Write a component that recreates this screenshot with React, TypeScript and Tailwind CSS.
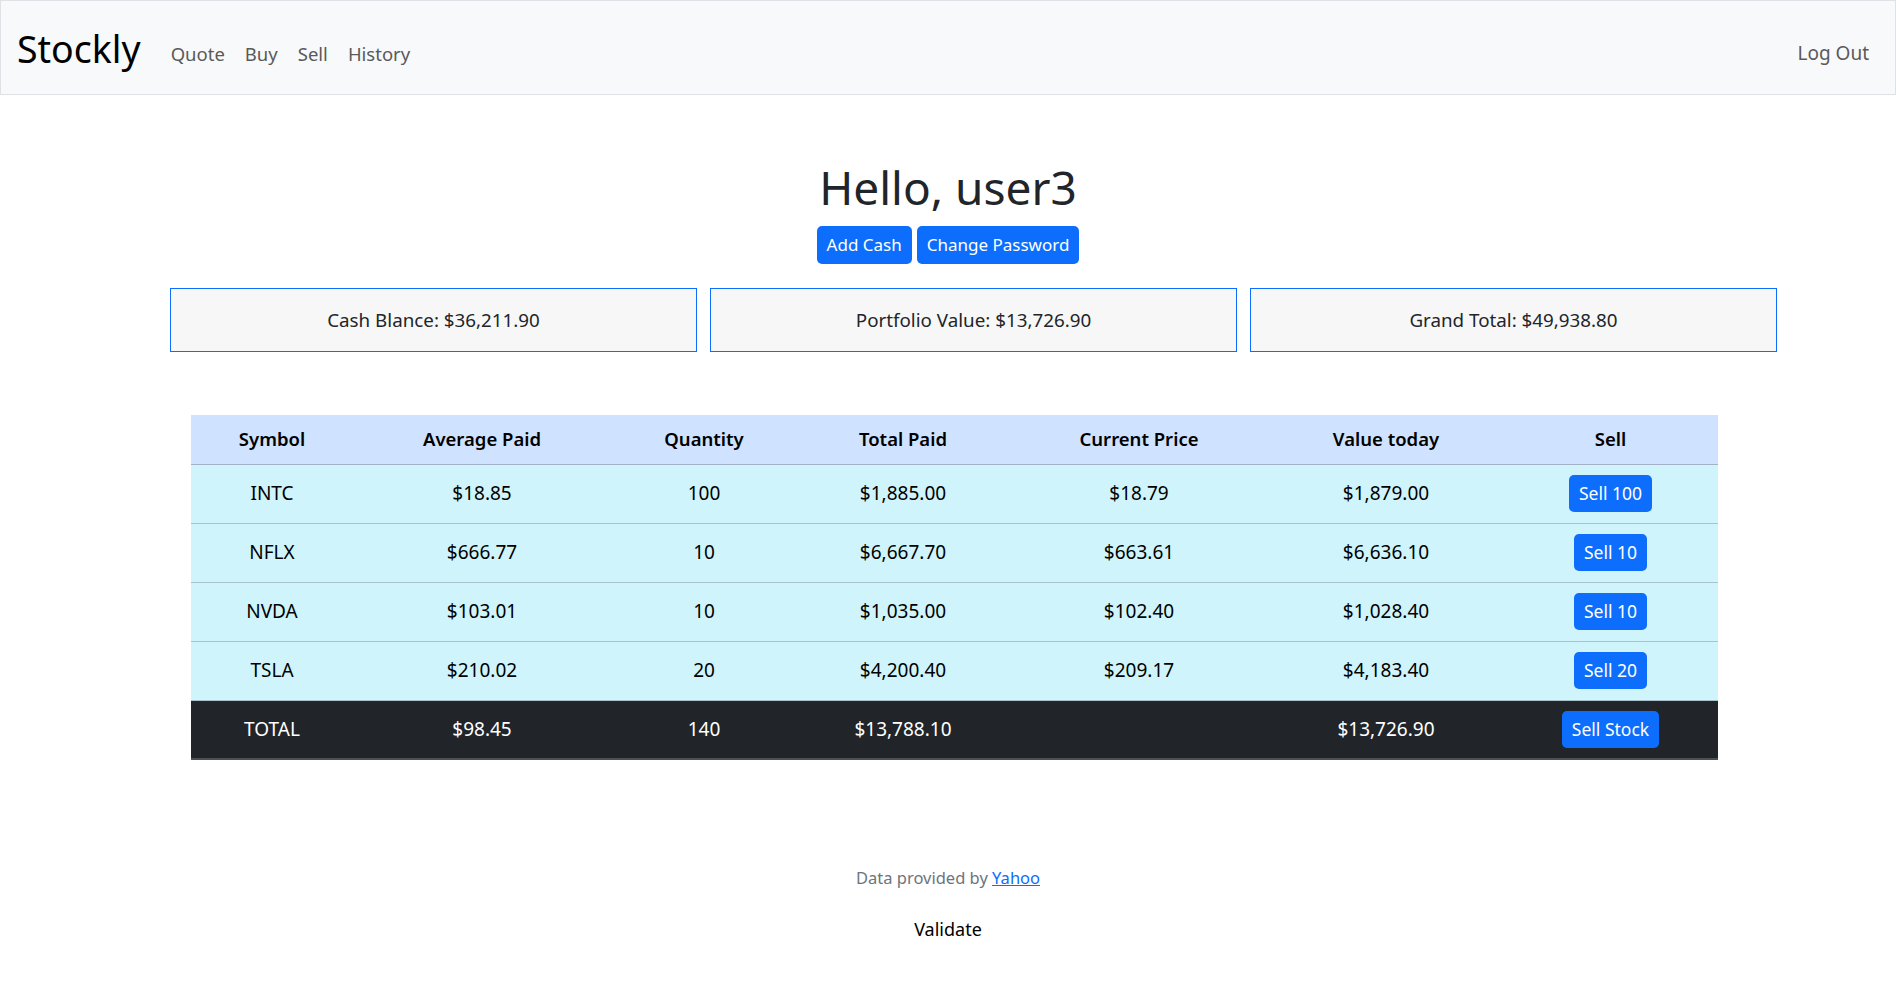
import React from 'react'

const font = { fontFamily: '"Noto Sans", "Open Sans", sans-serif' }

const holdings = [
  { symbol: 'INTC', avg: '$18.85', qty: 100, paid: '$1,885.00', price: '$18.79', value: '$1,879.00' },
  { symbol: 'NFLX', avg: '$666.77', qty: 10, paid: '$6,667.70', price: '$663.61', value: '$6,636.10' },
  { symbol: 'NVDA', avg: '$103.01', qty: 10, paid: '$1,035.00', price: '$102.40', value: '$1,028.40' },
  { symbol: 'TSLA', avg: '$210.02', qty: 20, paid: '$4,200.40', price: '$209.17', value: '$4,183.40' },
]

function Navbar() {
  return (
    <nav className="h-[95px] flex items-center justify-between bg-[#f8f9fa] border border-[#dee2e6] pl-[16px] pr-[26px]">
      <div className="flex items-center">
        <a className="text-[37.5px] text-black leading-none mr-[30px] mt-[2px]">Stockly</a>
        <ul className="flex items-center gap-[20px] text-[18.5px] text-[#595a5c] mt-[12px]">
          <li>Quote</li>
          <li>Buy</li>
          <li>Sell</li>
          <li>History</li>
        </ul>
      </div>
      <a className="text-[19px] text-[#595a5c] mt-[12px]">Log Out</a>
    </nav>
  )
}

function Btn({ children, className = '' }: { children: React.ReactNode; className?: string }) {
  return (
    <button className={`bg-[#0d6efd] text-white rounded-[5px] ${className}`}>{children}</button>
  )
}

export default function App() {
  return (
    <div className="min-h-screen bg-white text-[#212529]" style={font}>
      <Navbar />

      <main className="pt-[62px]">
        <div className="flex flex-col items-center">
          <h1 className="text-[46px] leading-[60px] font-normal">Hello, user3</h1>
          <div className="flex gap-[5px] mt-[9px]">
            <Btn className="h-[38px] px-[10px] text-[17px]">Add Cash</Btn>
            <Btn className="h-[38px] px-[10px] text-[17px]">Change Password</Btn>
          </div>
        </div>

        <div className="flex gap-[13px] pl-[170px] mt-[24px]">
          {['Cash Blance: $36,211.90', 'Portfolio Value: $13,726.90', 'Grand Total: $49,938.80'].map(t => (
            <div key={t} className="w-[527px] h-[64px] flex items-center justify-center border border-[#0d6efd] bg-[#f7f7f7] text-[18.8px]">
              {t}
            </div>
          ))}
        </div>

        <table className="ml-[191px] mt-[63px] w-[1527px] border-collapse text-[19px] text-center text-black">
          <colgroup>
            <col className="w-[162px]" />
            <col className="w-[258px]" />
            <col className="w-[186px]" />
            <col className="w-[212px]" />
            <col className="w-[260px]" />
            <col className="w-[234px]" />
            <col className="w-[215px]" />
          </colgroup>
          <thead>
            <tr className="h-[49px] bg-[#cfe2ff] border-b border-[#a3b0c8] text-[18.5px]">
              <th className="font-semibold">Symbol</th>
              <th className="font-semibold">Average Paid</th>
              <th className="font-semibold">Quantity</th>
              <th className="font-semibold">Total Paid</th>
              <th className="font-semibold">Current Price</th>
              <th className="font-semibold">Value today</th>
              <th className="font-semibold">Sell</th>
            </tr>
          </thead>
          <tbody>
            {holdings.map(h => (
              <tr key={h.symbol} className="h-[59px] bg-[#cff4fc] border-b border-[#a9c3cb]">
                <td>{h.symbol}</td>
                <td>{h.avg}</td>
                <td>{h.qty}</td>
                <td>{h.paid}</td>
                <td>{h.price}</td>
                <td>{h.value}</td>
                <td>
                  <Btn className="h-[37px] px-[10px] text-[17.5px]">Sell {h.qty}</Btn>
                </td>
              </tr>
            ))}
            <tr className="h-[59px] bg-[#212529] text-white border-b-2 border-[#4d5154]">
              <td>TOTAL</td>
              <td>$98.45</td>
              <td>140</td>
              <td>$13,788.10</td>
              <td></td>
              <td>$13,726.90</td>
              <td>
                <Btn className="h-[37px] px-[10px] text-[17.5px]">Sell Stock</Btn>
              </td>
            </tr>
          </tbody>
        </table>

        <footer className="flex flex-col items-center mt-[106px]">
          <p className="text-[16.5px] text-[#6c757d]">
            Data provided by <a className="text-[#0d6efd] underline">Yahoo</a>
          </p>
          <p className="text-[18px] text-black mt-[25px]">Validate</p>
        </footer>
      </main>
    </div>
  )
}
